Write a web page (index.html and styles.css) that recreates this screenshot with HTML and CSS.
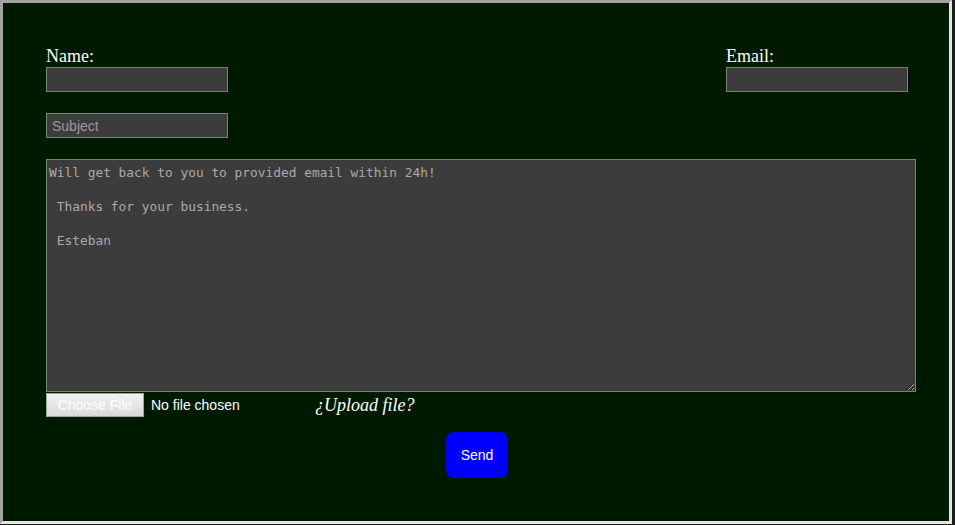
FILE: index.html
```html
<!DOCTYPE html>
<html>
<head>
<meta charset="utf-8">
<link rel="stylesheet" href="styles.css">
</head>
<body>
<form class="contact">
  <div class="top-row">
    <div class="field">
      <label class="lbl" for="name">Name:</label>
      <input class="txt" id="name" type="text">
    </div>
    <div class="field">
      <label class="lbl" for="email">Email:</label>
      <input class="txt" id="email" type="email">
    </div>
  </div>
  <input class="txt subject" type="text" placeholder="Subject">
  <textarea class="msg">Will get back to you to provided email within 24h!

 Thanks for your business.

 Esteban</textarea>
  <div class="file-row">
    <input class="file" type="file">
    <span class="upload">¿Upload file?</span>
  </div>
  <div class="send-row">
    <button class="send" type="button">Send</button>
  </div>
</form>
</body>
</html>
```
FILE: styles.css
```css
html {
  background: #1c1c1c;
}
body {
  margin: 0;
}
.contact {
  box-sizing: border-box;
  width: 952px;
  height: 524px;
  background: #001a00;
  border: 3px solid;
  border-color: #a3a3a3 #e3e8e3 #e3e8e3 #a3a3a3;
  padding: 43px 0 0 43px;
  display: flex;
  flex-direction: column;
  align-items: flex-start;
  font-family: "Liberation Sans", Arial, sans-serif;
}
.top-row {
  width: 862px;
  display: flex;
  justify-content: space-between;
}
.field {
  display: flex;
  flex-direction: column;
}
.lbl {
  font-family: "Liberation Serif", "Times New Roman", serif;
  font-size: 18px;
  line-height: 21px;
  color: #fafafa;
}
.txt {
  box-sizing: border-box;
  width: 182px;
  height: 25px;
  margin: 0;
  padding: 0 5px;
  background: #3c3c3c;
  border: 1px solid #76836f;
  color: #ddd;
  font-family: "Liberation Sans", Arial, sans-serif;
  font-size: 14px;
  outline: none;
}
.txt::placeholder {
  color: #9a9a9a;
}
.subject {
  margin-top: 21px;
}
.msg {
  box-sizing: border-box;
  width: 870px;
  height: 233px;
  margin: 21px 0 0 0;
  padding: 4px 2px 2px 2px;
  background: #3c3c3c;
  border: 1px solid #76836f;
  color: #aaaaaa;
  font-family: "DejaVu Sans Mono", "Liberation Mono", monospace;
  font-size: 12.85px;
  line-height: 17px;
  resize: both;
  outline: none;
}
.file-row {
  display: flex;
  align-items: center;
  margin-top: 1px;
}
.file {
  width: 250px;
  color: #fff;
  font-family: "Liberation Sans", Arial, sans-serif;
  font-size: 14px;
}
.file::file-selector-button {
  box-sizing: border-box;
  width: 98px;
  height: 24px;
  margin-right: 7px;
  color: #fff;
  background: linear-gradient(#f2f2f2, #d9d9d9);
  border: 1px solid #a3a3a3;
  font-family: "Liberation Sans", Arial, sans-serif;
  font-size: 14px;
}
.upload {
  margin-left: 19px;
  color: #fff;
  font-family: "Liberation Serif", "Times New Roman", serif;
  font-style: italic;
  font-size: 18px;
}
.send-row {
  width: 862px;
  display: flex;
  justify-content: center;
  margin-top: 15px;
}
.send {
  width: 62px;
  height: 46px;
  border: none;
  border-radius: 8px;
  background: #0000ff;
  color: #fff;
  font-family: "Liberation Sans", Arial, sans-serif;
  font-size: 14px;
  padding: 0;
}
```
